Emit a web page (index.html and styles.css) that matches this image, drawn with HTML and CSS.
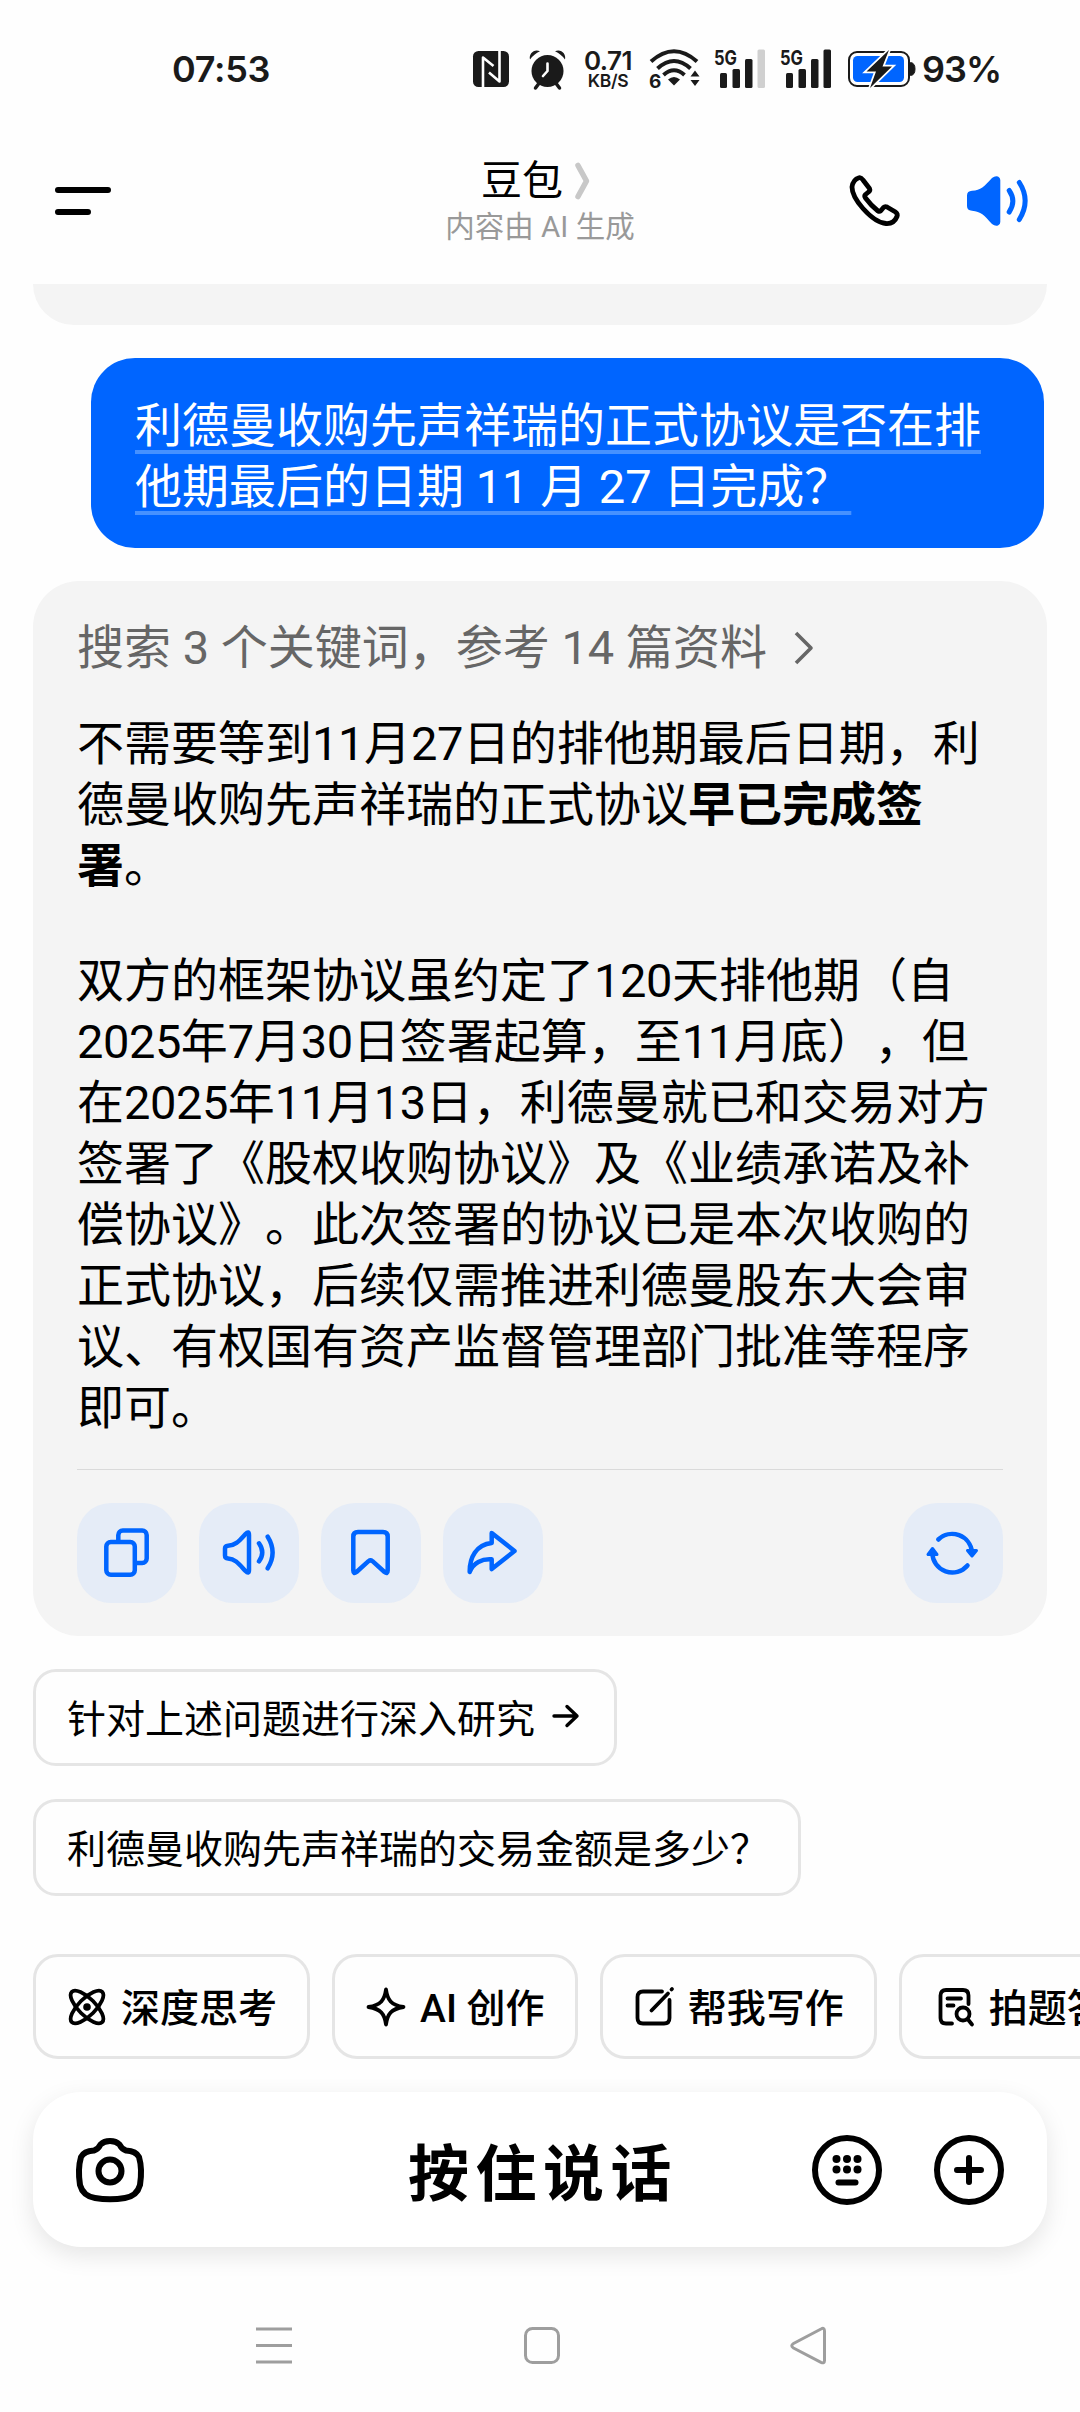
FILE: index.html
```html
<!DOCTYPE html>
<html lang="zh-CN">
<head>
<meta charset="utf-8">
<title>豆包</title>
<link rel="stylesheet" href="styles.css">
</head>
<body>
<div class="screen">
  <div class="status">
    <span class="clock">07:53</span>
    <svg class="st-nfc" width="36" height="36" viewBox="0 0 36 36"><rect width="36" height="36" rx="5.500" fill="#1a1a1a"/><path d="M10 36V6.500L20.500 15M26.500 0V30.500L16 21.500" fill="none" stroke="#fff" stroke-width="2.600" stroke-linejoin="round"/></svg>
    <svg class="st-alarm" width="37" height="39" viewBox="0 0 37 39"><circle cx="18.500" cy="21" r="16" fill="#1a1a1a"/><path d="M9.500 34L6.500 38M27.500 34L30.500 38" stroke="#1a1a1a" stroke-width="3.500" stroke-linecap="round"/><path d="M1 9.500C-.5 4 5 -1.500 11 1.300Q5 4 1 9.500ZM36 9.500C37.500 4 32 -1.500 26 1.300Q32 4 36 9.500Z" fill="#1a1a1a"/><path d="M18.500 13.500V21L14 26" fill="none" stroke="#fff" stroke-width="2.600" stroke-linecap="round" stroke-linejoin="round"/></svg>
    <div class="speed"><span class="speed-n">0.71</span><span class="speed-u">KB/S</span></div>
    <svg class="st-wifi" width="52" height="42" viewBox="0 0 52 42"><g fill="none" stroke="#1a1a1a" stroke-width="4"><path d="M2 13.500Q25 -7 48 13.500"/><path d="M8.500 20.500Q25 5.500 41.500 20.500"/><path d="M14.500 27Q25 17.500 35.500 27"/></g><path d="M19 31.500Q25 26.500 31 31.500L25 37.500Z" fill="#1a1a1a"/><path d="M41.500 28.500L46 22.500L50.500 28.500ZM41.500 32L46 38L50.500 32Z" fill="#1a1a1a"/><text class="st-six" x="0" y="40">6</text></svg>
    <svg class="st-sig" width="52" height="42" viewBox="0 0 52 42"><text class="st-5g" x="0" y="16.500" textLength="23" lengthAdjust="spacingAndGlyphs">5G</text><g fill="#1a1a1a"><rect x="6" y="25" width="7" height="15" rx="1.500"/><rect x="18.500" y="21" width="7.500" height="19" rx="1.500"/><rect x="31" y="11" width="7.500" height="29" rx="1.500"/></g><rect x="43.500" y="1.500" width="7.500" height="38.500" rx="1.500" fill="#d0d0d0"/></svg>
    <svg class="st-sig2" width="52" height="42" viewBox="0 0 52 42"><text class="st-5g" x="0" y="16.500" textLength="23" lengthAdjust="spacingAndGlyphs">5G</text><g fill="#1a1a1a"><rect x="6" y="25" width="7" height="15" rx="1.500"/><rect x="18.500" y="21" width="7.500" height="19" rx="1.500"/><rect x="31" y="11" width="7.500" height="29" rx="1.500"/><rect x="43.500" y="1.500" width="7.500" height="38.500" rx="1.500"/></g></svg>
    <svg class="st-bat" width="68" height="40" viewBox="0 0 68 40"><rect x="1" y="3" width="60" height="34" rx="8" fill="none" stroke="#1a1a1a" stroke-width="2"/><path d="M62.500 13.500Q67 14 67 20T62.500 26.500Z" fill="#1a1a1a" stroke="#1a1a1a"/><rect x="5" y="7" width="51" height="26" rx="4.500" fill="#0065ff"/><path d="M41 1L18.500 22.500H28L22 39L44 17.500H34.500Z" fill="#1a1a1a" stroke="#fff" stroke-width="3.500" paint-order="stroke"/></svg>
    <span class="percent">93%</span>
  </div>

  <header class="header">
    <svg class="menu" width="56" height="30" viewBox="0 0 56 30"><path d="M3 4H53M3 26H33" stroke="#000" stroke-width="6" stroke-linecap="round"/></svg>
    <div class="title">
      <div class="name"><span>豆包</span><svg width="16" height="36" viewBox="0 0 16 36"><path d="M3 2.500L11.500 18L3 33.500" fill="none" stroke="#c8c8c8" stroke-width="5.500" stroke-linejoin="round" stroke-linecap="round"/></svg></div>
      <div class="sub">内容由 AI 生成</div>
    </div>
    <div class="head-actions">
      <svg width="60" height="60" viewBox="0 0 60 60"><path d="M14 7.700Q16 7 18 10L24.500 18.500Q25.500 20.500 23.500 22L20.500 24.500Q19 26 20.500 28Q26 35.500 33 41Q34.500 42 36 40.500L38.500 37.500Q40 36 42 37L50.500 42Q53 44 52 46.500Q49 54 41 53.500Q31 53 18 38.500Q7 26 7 17Q8 9.500 14 7.700Z" fill="none" stroke="#000" stroke-width="4.800" stroke-linejoin="round"/></svg>
      <svg width="75" height="60" viewBox="0 0 75 60"><path d="M12 20.700C21 20.500 24 16.500 32 8Q35 5.500 38 6.500Q40.300 7.500 40.300 10V52Q40.300 54.500 38 55.500Q35 56.500 32 54C24 45 21 41.500 12 40.700Q7 40.500 7 36V25.500Q7 21 12 20.700Z" fill="#0065ff"/><path d="M49.200 20.500Q56.500 31 49.200 42M59.300 12.500Q71 30.500 59.300 49.500" fill="none" stroke="#0065ff" stroke-width="5" stroke-linecap="round"/></svg>
    </div>
  </header>

  <main class="chat">
    <div class="prev"></div>
    <div class="ask"><span class="ul">利德曼收购先声祥瑞的正式协议是否在排</span><br><span class="ul">他期最后的日期 11 月 27 日完成？</span></div>
    <article class="answer">
      <div class="search"><span>搜索 3 个关键词，参考 14 篇资料</span><svg width="22" height="36" viewBox="0 0 22 36"><path d="M3 3L18 18L3 33" fill="none" stroke="#666" stroke-width="3.600" stroke-linejoin="round"/></svg></div>
      <p>不需要等到<i>11</i>月<i>27</i>日的排他期最后日期，利<br>德曼收购先声祥瑞的正式协议<b>早已完成签<br>署</b>。</p>
      <p>双方的框架协议虽约定了<i>120</i>天排他期（自<br><i>2025</i>年<i>7</i>月<i>30</i>日签署起算，至<i>11</i>月底），但<br>在<i>2025</i>年<i>11</i>月<i>13</i>日，利德曼就已和交易对方<br>签署了《股权收购协议》及《业绩承诺及补<br>偿协议》。此次签署的协议已是本次收购的<br>正式协议，后续仅需推进利德曼股东大会审<br>议、有权国有资产监督管理部门批准等程序<br>即可。</p>
      <div class="tools">
        <div class="tool"><svg viewBox="0 0 100 100"><rect x="29.300" y="39" width="28.500" height="32.700" rx="4.500"/><path d="M41.300 38V32a4.500 4.500 0 0 1 4.500-4.500H65.200a4.500 4.500 0 0 1 4.500 4.500V55.500a4.500 4.500 0 0 1-4.500 4.500H59"/></svg></div>
        <div class="tool"><svg viewBox="0 0 100 100"><path d="M29 42.800C36.500 42.500 40 38 46.500 31Q50 27.500 50 32V67Q50 71.500 46.500 68C40 61 36.500 56 29 55.500Q26 55.300 26 52.500V45.500Q26 43 29 42.800ZM60 40.300Q66.500 49.500 60 58.300M68.700 33.700Q78.500 49.500 68.700 65.300"/></svg></div>
        <div class="tool"><svg viewBox="0 0 100 100"><path d="M37 29H62Q66.700 29 66.700 33.500V67.500Q66.700 71.500 63.500 69L51.500 58.200Q49.500 56.600 47.500 58.200L35.500 69Q32.300 71.500 32.300 67.500V33.500Q32.300 29 37 29Z"/></svg></div>
        <div class="tool"><svg viewBox="0 0 100 100"><path d="M48.700 30L71.500 48L48.700 66V56.300C39 55.500 30 60 26.700 69C26.500 55 33 41.500 48.700 40Z"/></svg></div>
        <div class="tool last"><svg viewBox="0 0 100 100"><path d="M35.300 36.500A20 20 0 0 1 69 49M29.300 50A20 20 0 0 0 64.500 62.500"/><path class="solid" d="M64.500 47.500H73.500L69 53ZM25 51.500H34L29.500 45.500Z"/></svg></div>
      </div>
    </article>
    <div class="follow"><span>针对上述问题进行深入研究</span><svg width="34" height="36" viewBox="0 0 34 36"><path d="M3 18H26M16 8.500L26 18L16 27.500" fill="none" stroke="#000" stroke-width="3.400" stroke-linecap="round" stroke-linejoin="round"/></svg></div>
    <div class="follow">利德曼收购先声祥瑞的交易金额是多少？</div>
  </main>

  <div class="skills">
    <div class="skill"><svg viewBox="0 0 40 40"><ellipse cx="20" cy="20" rx="8.500" ry="21.500" transform="rotate(45 20 20)"/><ellipse cx="20" cy="20" rx="8.500" ry="21.500" transform="rotate(-45 20 20)"/><circle class="dot" cx="20" cy="20" r="3.800"/></svg><span>深度思考</span></div>
    <div class="skill"><svg viewBox="0 0 40 40"><path d="M20 2.500C21.500 13 25 18 37.500 20C25 22 21.500 27 20 37.500C18.500 27 15 22 2.500 20C15 18 18.500 13 20 2.500Z"/></svg><span>AI 创作</span></div>
    <div class="skill"><svg viewBox="0 0 40 40"><path d="M28 4.500H9Q3.500 4.500 3.500 10V31Q3.500 36.500 9 36.500H30Q35.500 36.500 35.500 31V13M17.500 23.500L34 6.500M37.500 2.500L38 2"/></svg><span>帮我写作</span></div>
    <div class="skill doc"><svg viewBox="0 0 40 40"><path d="M17 36.500H11Q5.500 36.500 5.500 31V8.500Q5.500 3 11 3H28Q33.500 3 33.500 8.500V17M12.500 11.500H26M12.500 18.500H18.500M33 32.500L37 37.500"/><circle cx="28" cy="27" r="6.500"/></svg><span>拍题答疑</span></div>
  </div>

  <div class="inputbar">
    <svg width="70" height="70" viewBox="0 0 70 70"><path d="M35 6Q41 6 44.500 9.500Q47 14.500 51 15.500Q61 16 64 22Q67.500 34 65 50Q62 61 50 63Q35 65.500 20 63Q8 61 5 50Q2.500 34 6 22Q9 16 19 15.500Q23 14.500 25.500 9.500Q29 6 35 6Z"/><circle cx="35" cy="36" r="11.500"/></svg>
    <span class="hold">按住说话</span>
    <svg width="72" height="72" viewBox="0 0 72 72"><circle cx="36" cy="36" r="32"/><g class="dot"><circle cx="25.500" cy="25" r="4"/><circle cx="36" cy="25" r="4"/><circle cx="46.500" cy="25" r="4"/><circle cx="25.500" cy="35.500" r="4"/><circle cx="36" cy="35.500" r="4"/><circle cx="46.500" cy="35.500" r="4"/></g><path d="M27.500 48.500H44.500"/></svg>
    <svg class="plus" width="72" height="72" viewBox="0 0 72 72"><circle cx="36" cy="36" r="32"/><path d="M36 24V48M24 36H48"/></svg>
  </div>

  <nav class="nav">
    <svg width="36" height="38" viewBox="0 0 36 38"><path d="M0 2H36M0 18.500H36M0 35H36"/></svg>
    <svg width="36" height="38" viewBox="0 0 36 38"><rect x="2.500" y="1.500" width="33" height="34" rx="7"/></svg>
    <svg width="36" height="38" viewBox="0 0 36 38"><path d="M31 2Q34.500 0 34.500 4V33.500Q34.500 37 31 35.300L3.500 21Q0 18.700 3.500 16.500Z"/></svg>
  </nav>
</div>
</body>
</html>
```
FILE: styles.css
```css
* { box-sizing: border-box; }
body { margin: 0; background: #fefefe; }
.screen {
  width: 1080px; height: 2412px; overflow: hidden;
  display: flex; flex-direction: column;
  font-family: Roboto, "Noto Sans CJK SC", sans-serif;
  color: #000; background: #fefefe; white-space: nowrap;
  text-spacing-trim: space-all; text-autospace: no-autospace;
}
svg { display: block; flex: none; overflow: visible; }

.status { height: 138px; padding-left: 172px; display: flex; align-items: center; color: #1a1a1a; font-family: Inter, Roboto, sans-serif; font-weight: 600; flex: none; }
.clock { width: 301px; font-size: 36px; letter-spacing: -.3px; }
.st-alarm { margin-left: 20px; }
.speed { width: 54px; margin-left: 15px; display: flex; flex-direction: column; align-items: center; }
.speed-n { font-size: 26px; line-height: 22px; letter-spacing: -.5px; }
.speed-u { font-size: 17.500px; line-height: 17px; letter-spacing: -.3px; }
.st-wifi { margin-left: 14px; }
.st-six { font-size: 19px; font-weight: 700; fill: #1a1a1a; }
.st-5g { font-size: 20px; font-weight: 700; fill: #1a1a1a; }
.st-sig { margin-left: 13px; }
.st-sig2 { margin-left: 14px; }
.st-bat { margin-left: 16px; }
.percent { margin-left: 6px; font-size: 36px; letter-spacing: -1px; }

.header { height: 146px; padding: 0 55px; display: grid; grid-template-columns: 1fr auto 1fr; flex: none; }
.menu { margin-top: 48px; }
.title { display: flex; flex-direction: column; align-items: center; padding-top: 18px; }
.name { display: flex; align-items: center; gap: 12px; font-size: 41px; line-height: 50px; padding-right: 8px; }
.sub { font-size: 29.500px; line-height: 42px; color: #999; }
.head-actions { display: flex; justify-content: flex-end; gap: 55px; padding-top: 32px; margin-right: -10px; }

.chat { height: 1670px; padding-left: 33px; display: flex; flex-direction: column; align-items: flex-start; flex: none; }
.prev { width: 1014px; height: 41px; border-radius: 0 0 48px 48px; background: #f4f4f4; }
.ask { width: 953px; height: 190px; margin: 33px 0 33px 58px; padding: 37px 44px; border-radius: 44px; background: #0065ff; color: #fff; font-size: 47px; line-height: 61px; }
.ul { text-decoration: underline; text-decoration-color: #4691ff; text-decoration-thickness: 4px; text-underline-offset: 8px; text-decoration-skip-ink: none; }
.answer { width: 1014px; height: 1055px; border-radius: 46px; background: #f4f4f4; padding: 36px 44px 0 44px; font-size: 47px; line-height: 61px; }
.search { display: flex; align-items: center; gap: 26px; color: #666; }
.answer p { margin: 35px 0 0; }
.answer p + p { margin-top: 54px; }
.answer b { font-weight: 700; }
.answer i { font-style: normal; letter-spacing: -.45px; }
.tools { margin: 31px 0 0; padding-top: 33px; border-top: 1px solid #dadada; display: flex; gap: 22px; }
.tool { width: 100px; height: 100px; border-radius: 34px; background: #e5ecf7; }
.tool svg { width: 100px; height: 100px; fill: none; stroke: #0065ff; stroke-width: 4.500; stroke-linejoin: round; stroke-linecap: round; }
.tool .solid { fill: #0065ff; stroke-width: 3; }
.last { margin-left: auto; }
.follow { height: 97px; margin-top: 33px; padding: 0 29px 3px 31px; border: 3px solid #e5e5e5; border-radius: 23px; font-size: 39px; display: flex; align-items: center; }
.follow svg { margin-left: 16px; }

.skills { height: 105px; padding-left: 33px; display: flex; gap: 22px; flex: none; }
.skill { height: 105px; padding: 0 30px 0 31px; border: 3px solid #e5e5e5; border-radius: 25px; display: flex; align-items: center; gap: 14px; font-size: 39px; font-weight: 500; flex: none; }
.skill span { padding-bottom: 3px; }
.skill svg { width: 40px; height: 40px; fill: none; stroke: #000; stroke-width: 3.800; stroke-linejoin: round; stroke-linecap: round; }
.dot { fill: #000; stroke: none; }
.doc { padding-left: 33px; }
.inputbar { width: 1014px; height: 155px; margin: 33px 0 0 33px; padding: 0 42px; border-radius: 48px; background: #fff; box-shadow: 0 8px 24px rgba(0,0,0,.1); display: flex; align-items: center; flex: none; }
.inputbar svg { fill: none; stroke: #000; stroke-width: 6; stroke-linecap: round; stroke-linejoin: round; }
.inputbar svg .dot { fill: #000; stroke: none; }
.hold { margin: 0 auto 0 263px; font-size: 61px; font-weight: 700; letter-spacing: 6.500px; }
.inputbar .plus { margin-left: 50px; }

.nav { margin-top: 80px; padding: 0 254px 0 256px; display: flex; justify-content: space-between; flex: none; }
.nav svg { fill: none; stroke: #9e9e9e; stroke-width: 3; }
```
